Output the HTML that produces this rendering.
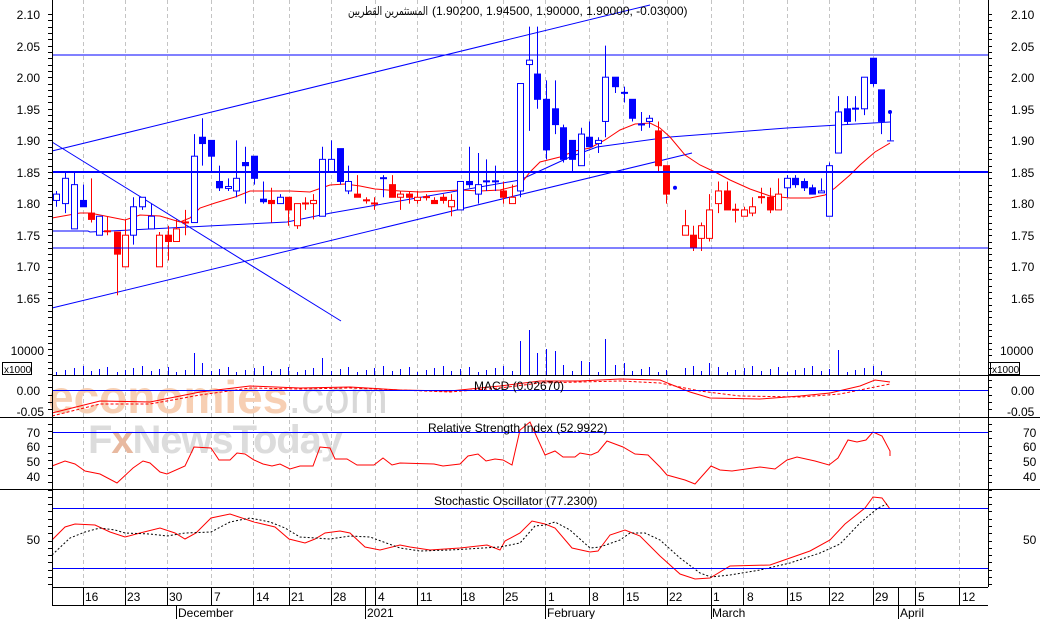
<!DOCTYPE html>
<html><head><meta charset="utf-8"><style>
html,body{margin:0;padding:0;background:#fff;}
svg{display:block;font-family:"Liberation Sans","DejaVu Sans",sans-serif;}
text{font-size:12px;fill:#000;}
</style></head><body>
<svg id="c" width="1040" height="619" viewBox="0 0 1040 619" xmlns="http://www.w3.org/2000/svg">
<rect width="1040" height="619" fill="#fff"/>
<g id="grid"></g>
<text x="48" y="413" textLength="340" style="font-size:46px;fill:#f7cfb3;font-weight:bold;">economies<tspan style="fill:#d8d8d8;font-weight:normal">.com</tspan></text>
<text x="88" y="453" textLength="255" style="font-size:40px;fill:#dcdcdc;font-weight:bold;">F<tspan style="fill:#e8b9a0">x</tspan>NewsToday</text>
<g id="draw"></g>
<line x1="52" y1="55" x2="988" y2="55" stroke="#0000ff" stroke-width="1"/>
<line x1="52" y1="172" x2="988" y2="172" stroke="#0000ff" stroke-width="2"/>
<line x1="52" y1="248" x2="988" y2="248" stroke="#0000ff" stroke-width="1"/>
<line x1="52" y1="390.5" x2="988" y2="390.5" stroke="#0000ff"/>
<line x1="52" y1="432.5" x2="988" y2="432.5" stroke="#0000ff"/>
<line x1="52" y1="508.5" x2="988" y2="508.5" stroke="#0000ff"/>
<line x1="52" y1="568.5" x2="988" y2="568.5" stroke="#0000ff"/>
<g stroke="#000" stroke-width="1">
<line x1="52.5" y1="0" x2="52.5" y2="605"/>
<line x1="988.5" y1="0" x2="988.5" y2="587"/>
<line x1="52" y1="375.5" x2="1040" y2="375.5"/>
<line x1="0" y1="417.5" x2="1040" y2="417.5"/>
<line x1="0" y1="489.5" x2="1040" y2="489.5"/>
<line x1="52" y1="587.5" x2="988" y2="587.5"/>
<line x1="52" y1="605.5" x2="988" y2="605.5"/>
</g>
<rect x="2.5" y="362.5" width="29" height="12" fill="none" stroke="#000"/>
<text x="4" y="373" style="font-size:10px">x1000</text>
<rect x="990.5" y="362.5" width="29" height="12" fill="none" stroke="#000"/>
<text x="992" y="373" style="font-size:10px">x1000</text>
<g text-anchor="end">
<text x="40" y="19">2.10</text><text x="40" y="51">2.05</text><text x="40" y="82">2.00</text><text x="40" y="114">1.95</text><text x="40" y="145">1.90</text><text x="40" y="177">1.85</text><text x="40" y="208">1.80</text><text x="40" y="240">1.75</text><text x="40" y="271">1.70</text><text x="40" y="303">1.65</text>
<text x="44" y="355">10000</text>
<text x="40" y="395">0.00</text><text x="44" y="416">-0.05</text>
<text x="40" y="437">70</text><text x="40" y="451">60</text><text x="40" y="466">50</text><text x="40" y="481">40</text>
<text x="40" y="544">50</text>
</g>
<g>
<text x="1011" y="19">2.10</text><text x="1011" y="51">2.05</text><text x="1011" y="82">2.00</text><text x="1011" y="114">1.95</text><text x="1011" y="145">1.90</text><text x="1011" y="177">1.85</text><text x="1011" y="208">1.80</text><text x="1011" y="240">1.75</text><text x="1011" y="271">1.70</text><text x="1011" y="303">1.65</text>
<text x="1000" y="355">10000</text>
<text x="1011" y="395">0.00</text><text x="1007" y="416">-0.05</text>
<text x="1023" y="437">70</text><text x="1023" y="451">60</text><text x="1023" y="466">50</text><text x="1023" y="481">40</text>
<text x="1023" y="544">50</text>
</g>
<text x="428" y="15" text-anchor="end" textLength="80" lengthAdjust="spacingAndGlyphs">المستثمرين القطريين</text>
<text x="432" y="15">(1.90200, 1.94500, 1.90000, 1.90000, -0.03000)</text>
<text x="474" y="390">MACD (0.02670)</text>
<text x="428" y="432">Relative Strength Index (52.9922)</text>
<text x="434" y="505">Stochastic Oscillator (77.2300)</text>
<g>
<text x="85" y="601">16</text><text x="127" y="601">23</text><text x="169" y="601">30</text><text x="214" y="601">7</text><text x="256" y="601">14</text><text x="291" y="601">21</text><text x="333" y="601">28</text><text x="378" y="601">4</text><text x="420" y="601">11</text><text x="462" y="601">18</text><text x="505" y="601">25</text><text x="548" y="601">1</text><text x="592" y="601">8</text><text x="626" y="601">15</text><text x="669" y="601">22</text><text x="713" y="601">1</text><text x="747" y="601">8</text><text x="789" y="601">15</text><text x="831" y="601">22</text><text x="875" y="601">29</text><text x="918" y="601">5</text><text x="962" y="601">12</text>
<text x="178" y="617">December</text><text x="367" y="617">2021</text><text x="547" y="617">February</text><text x="712" y="617">March</text><text x="900" y="617">April</text>
</g>
<g stroke="#000" id="dticks"></g>
</svg>
<script>
var NS="http://www.w3.org/2000/svg";
function el(p,t,a){var e=document.createElementNS(NS,t);for(var k in a)e.setAttribute(k,a[k]);p.appendChild(e);return e;}
var G=document.getElementById('grid'),D=document.getElementById('draw'),T=document.getElementById('dticks');
var gx=[83,125,167,211,253,289,331,375,417,461,503,545,589,623,667,711,743,787,829,873,915,959];
gx.forEach(function(x){el(G,'line',{x1:x+.5,y1:0,x2:x+.5,y2:587,stroke:'#c4c4c4','stroke-dasharray':'4,3'});el(T,'line',{x1:x+.5,y1:587,x2:x+.5,y2:605});});
[176,365,545,711,898].forEach(function(x){el(T,'line',{x1:x+.5,y1:605,x2:x+.5,y2:619});});
[365,898].forEach(function(x){el(T,'line',{x1:x+.5,y1:587,x2:x+.5,y2:605});});
for(var y=14;y<375;y+=6.32){el(T,'line',{x1:48,y1:Math.round(y)+.5,x2:52,y2:Math.round(y)+.5});el(T,'line',{x1:988,y1:Math.round(y)+.5,x2:992,y2:Math.round(y)+.5});}
for(var y=380;y<587;y+=7.3){el(T,'line',{x1:48,y1:Math.round(y)+.5,x2:52,y2:Math.round(y)+.5});el(T,'line',{x1:988,y1:Math.round(y)+.5,x2:992,y2:Math.round(y)+.5});}
function P(p){return 14+(2.10-p)*632;}
function pl(pts,col,w,dash){var s=pts.map(function(q){return q[0]+','+q[1]}).join(' ');var a={points:s,fill:'none',stroke:col,'stroke-width':w||1};if(dash)a['stroke-dasharray']=dash;el(D,'polyline',a);}
pl([[52,151],[650,5]],'#0000ff');
pl([[52,308],[692,153]],'#0000ff');
pl([[52,142],[341,321]],'#0000ff');
pl([[52,231],[88,231],[90,232],[287,222],[331,213],[520,180],[570,157],[597,147],[670,137],[787,128],[890,122]],'#0000ff');
pl([[52,218],[80,213],[90,213],[110,217],[125,220],[140,215],[160,216],[180,222],[190,218],[200,208],[215,203],[235,197],[250,191],[290,191],[310,192],[330,185],[345,184],[360,186],[375,189],[400,191],[420,192],[440,191],[460,190],[480,191],[500,190],[520,185],[530,172],[540,162],[560,157],[575,151],[590,148],[605,140],[620,130],[635,124],[650,123],[660,128],[670,137],[685,155],[700,165],[715,172],[730,180],[750,189],[770,196],[790,198],[810,198],[825,195],[835,188],[850,175],[860,165],[875,152],[890,143]],'#ff0000');
var C=[[56,1.815,1.805,'b',0,1.82,1.795],[65,1.84,1.80,'b',0,1.85,1.785],[74,1.83,1.76,'b',0,1.85,1.76],[83,1.805,1.795,'b',1,1.83,1.795],[91,1.785,1.775,'r',1,1.84,1.77],[99,1.78,1.75,'b',0,1.78,1.75],[107,1.757,1.755,'r',1,1.78,1.75],[117,1.755,1.72,'r',1,1.755,1.655],[125,1.75,1.70,'r',0,1.775,1.70],[133,1.795,1.75,'b',0,1.81,1.735],[142,1.81,1.795,'b',0,1.81,1.79],[151,1.78,1.76,'b',0,1.80,1.76],[159,1.75,1.70,'r',0,1.755,1.70],[168,1.75,1.74,'r',1,1.765,1.71],[176,1.76,1.74,'r',0,1.775,1.74],[185,1.771,1.769,'r',1,1.79,1.75],[194,1.875,1.77,'b',0,1.91,1.77],[202,1.905,1.895,'b',1,1.935,1.86],[211,1.90,1.875,'b',1,1.90,1.85],[219,1.835,1.825,'b',1,1.86,1.82],[228,1.827,1.824,'b',0,1.84,1.82],[236,1.84,1.82,'b',0,1.90,1.81],[245,1.865,1.86,'b',1,1.89,1.80],[254,1.875,1.84,'b',1,1.875,1.83],[263,1.807,1.803,'b',1,1.835,1.80],[271,1.805,1.80,'r',1,1.825,1.77],[280,1.81,1.80,'b',0,1.815,1.80],[288,1.81,1.79,'r',1,1.81,1.765],[297,1.80,1.765,'r',0,1.80,1.76],[305,1.801,1.799,'r',1,1.81,1.79],[313,1.805,1.80,'r',0,1.815,1.775],[322,1.87,1.78,'b',0,1.89,1.78],[331,1.87,1.85,'b',0,1.90,1.85],[340,1.887,1.835,'b',1,1.887,1.83],[348,1.835,1.82,'b',0,1.86,1.815],[357,1.815,1.81,'r',1,1.845,1.81],[366,1.806,1.804,'r',1,1.81,1.80],[374,1.801,1.799,'r',1,1.81,1.79],[383,1.841,1.839,'b',1,1.845,1.81],[392,1.83,1.81,'r',1,1.845,1.81],[400,1.815,1.81,'r',0,1.82,1.79],[409,1.815,1.81,'r',1,1.82,1.80],[417,1.81,1.805,'r',0,1.82,1.80],[426,1.811,1.809,'r',1,1.815,1.805],[434,1.805,1.80,'r',1,1.81,1.80],[443,1.81,1.805,'r',1,1.815,1.80],[451,1.805,1.795,'r',0,1.815,1.78],[460,1.835,1.79,'b',0,1.835,1.79],[469,1.835,1.83,'b',1,1.89,1.825],[478,1.83,1.815,'b',0,1.88,1.80],[486,1.836,1.834,'b',1,1.87,1.82],[495,1.836,1.834,'b',1,1.86,1.82],[503,1.82,1.81,'r',1,1.835,1.80],[512,1.81,1.80,'r',0,1.83,1.80],[520,1.99,1.82,'b',0,1.99,1.81],[529,2.027,2.02,'b',0,2.08,1.915],[537,2.005,1.965,'b',1,2.08,1.95],[546,1.965,1.885,'b',1,1.995,1.87],[555,1.95,1.925,'b',1,1.995,1.91],[563,1.92,1.87,'b',1,1.925,1.865],[572,1.90,1.87,'b',1,1.90,1.85],[581,1.91,1.86,'b',0,1.92,1.86],[589,1.905,1.89,'b',1,1.93,1.89],[598,1.90,1.895,'b',0,1.905,1.88],[605,2.00,1.93,'b',0,2.05,1.905],[615,2.00,1.985,'b',1,2.00,1.975],[624,1.976,1.974,'b',1,1.985,1.96],[632,1.965,1.935,'b',1,1.965,1.93],[641,1.926,1.924,'b',1,1.945,1.915],[649,1.935,1.93,'b',0,1.94,1.92],[658,1.915,1.86,'r',1,1.93,1.85],[666,1.86,1.815,'r',1,1.86,1.80],[685,1.765,1.75,'r',0,1.79,1.75],[693,1.75,1.73,'r',1,1.765,1.725],[701,1.765,1.745,'r',0,1.77,1.725],[709,1.79,1.745,'r',0,1.815,1.74],[718,1.82,1.80,'r',0,1.835,1.785],[727,1.82,1.79,'r',1,1.835,1.79],[735,1.791,1.789,'r',1,1.80,1.77],[744,1.79,1.78,'r',0,1.795,1.78],[752,1.795,1.785,'r',0,1.81,1.78],[761,1.811,1.809,'r',1,1.825,1.80],[770,1.81,1.79,'r',1,1.825,1.785],[778,1.815,1.79,'r',0,1.84,1.79],[787,1.84,1.825,'b',0,1.845,1.81],[795,1.84,1.83,'b',1,1.845,1.825],[804,1.835,1.825,'b',1,1.84,1.82],[812,1.825,1.815,'b',1,1.83,1.815],[821,1.82,1.817,'b',0,1.84,1.817],[829,1.86,1.78,'b',0,1.865,1.78],[838,1.945,1.88,'b',0,1.97,1.88],[847,1.95,1.93,'b',1,1.97,1.925],[855,1.951,1.949,'b',1,1.97,1.93],[864,2.00,1.95,'b',0,2.00,1.94],[873,2.03,1.99,'b',1,2.03,1.985],[881,1.98,1.93,'b',1,1.98,1.91]];
C.forEach(function(c){var col=c[3]=='b'?'#0000ff':'#ff0000';var x=c[0];
el(D,'line',{x1:x+.5,y1:P(c[5]),x2:x+.5,y2:P(c[6]),stroke:col});
var t=P(c[1]),b=P(c[2]);if(b-t<1.5){el(D,'line',{x1:x-3,y1:t+.5,x2:x+4,y2:t+.5,stroke:col,'stroke-width':2});return;}
el(D,'rect',{x:x-2.5,y:t,width:6,height:b-t,fill:c[4]?col:'#fff',stroke:col});});
el(D,'circle',{cx:675,cy:P(1.825),r:2,fill:'#0000ff'});
el(D,'circle',{cx:890,cy:P(1.945),r:2,fill:'#0000ff'});
el(D,'line',{x1:890.5,y1:P(1.945),x2:890.5,y2:P(1.90),stroke:'#0000ff'});
el(D,'line',{x1:887,y1:P(1.90)+.5,x2:894,y2:P(1.90)+.5,stroke:'#0000ff'});
var V={194:22,202:12,322:17,520:34,529:45,537:22,546:26,555:24,605:36,838:25,581:14,589:13,563:10,624:12,615:10,700:15,753:13,709:12};
C.forEach(function(c,i){var h=V[c[0]]||(3+((i*37)%7));el(D,'line',{x1:c[0]+.5,y1:375-h,x2:c[0]+.5,y2:375,stroke:'#0000ff'});});
pl([[52,413],[100,401],[150,402],[200,392],[250,386],[300,388],[350,387],[400,390],[450,391],[500,386],[540,381],[580,381],[620,379],[660,380],[690,392],[710,398],[760,399],[800,396],[830,393],[860,386],[875,380],[890,382]],'#ff0000');
pl([[52,416],[100,404],[150,404],[200,395],[250,388],[300,389],[350,388],[400,390],[450,392],[500,388],[540,383],[580,382],[620,381],[660,383],[700,391],[740,396],[800,397],[840,394],[870,388],[890,384]],'#ff0000',1,'3,2');
pl([[52,466],[65,461],[75,464],[85,471],[100,474],[117,483],[133,468],[143,461],[150,463],[160,472],[167,474],[185,466],[194,447],[211,448],[219,460],[230,460],[237,453],[245,454],[254,460],[263,464],[272,466],[280,464],[290,469],[300,466],[313,466],[320,447],[330,448],[335,459],[347,459],[357,465],[374,465],[383,458],[392,465],[400,463],[434,464],[443,466],[460,464],[468,456],[478,454],[486,461],[495,459],[503,460],[512,465],[520,430],[530,422],[545,455],[555,451],[563,457],[575,457],[580,453],[591,455],[598,452],[607,441],[615,444],[623,447],[635,454],[648,455],[660,467],[667,475],[685,480],[695,484],[711,466],[720,470],[732,471],[760,467],[775,469],[787,460],[797,457],[815,461],[829,465],[838,458],[848,440],[857,442],[866,440],[873,432],[882,436],[890,451],[890,456]],'#ff0000');
pl([[52,540],[65,527],[75,524],[95,525],[110,532],[125,537],[140,533],[160,528],[175,533],[185,539],[196,533],[211,518],[230,514],[254,522],[275,527],[289,539],[305,543],[315,539],[325,533],[340,531],[350,533],[365,547],[380,550],[400,545],[410,547],[430,550],[460,548],[487,545],[500,550],[505,541],[520,533],[532,521],[545,524],[555,528],[572,548],[590,552],[598,551],[610,535],[625,530],[640,536],[660,556],[680,574],[695,579],[710,578],[730,566],[770,565],[790,558],[810,551],[830,540],[845,524],[865,508],[873,497],[882,498],[890,509]],'#ff0000');
pl([[52,555],[70,538],[85,532],[100,528],[115,530],[125,533],[150,534],[167,536],[185,533],[211,532],[230,522],[250,518],[270,522],[285,528],[300,537],[330,539],[350,536],[370,537],[400,548],[420,551],[450,550],[500,547],[520,543],[535,526],[545,525],[555,522],[570,530],[590,548],[600,547],[620,540],[630,533],[645,533],[660,540],[680,558],[700,573],[711,577],[730,575],[760,570],[790,563],[820,553],[840,544],[860,523],[878,508],[887,504]],'#000',1,'2,2');
</script>
</body></html>
